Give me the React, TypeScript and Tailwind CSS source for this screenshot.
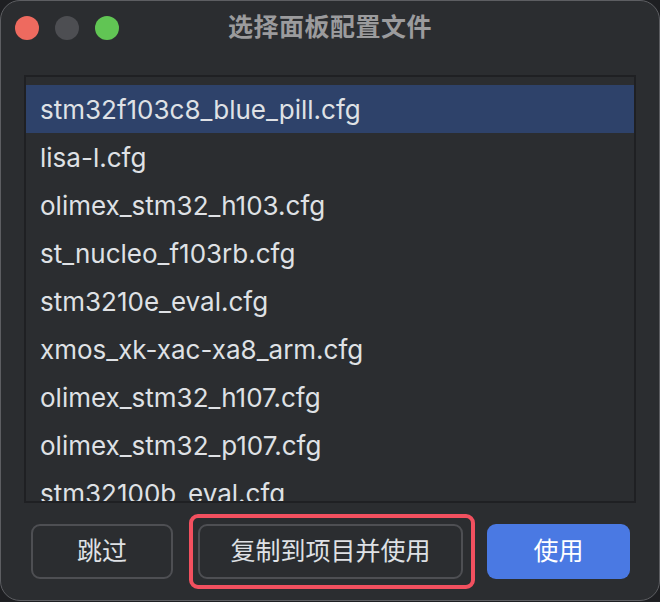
import React from 'react';

const configs = [
  'stm32f103c8_blue_pill.cfg',
  'lisa-l.cfg',
  'olimex_stm32_h103.cfg',
  'st_nucleo_f103rb.cfg',
  'stm3210e_eval.cfg',
  'xmos_xk-xac-xa8_arm.cfg',
  'olimex_stm32_h107.cfg',
  'olimex_stm32_p107.cfg',
  'stm32100b_eval.cfg',
];

const cjk = "font-['Inter','Noto_Sans_CJK_SC',sans-serif]";

export default function App() {
  return (
    <div className="w-[660px] h-[602px] bg-[#1e1f22] overflow-hidden">
      <div className="w-[660px] h-[601px] flex flex-col rounded-[20px] border border-[#5d5e62] bg-[#2b2d30] overflow-hidden">
        {/* Title bar */}
        <div className="grid grid-cols-[1fr_auto_1fr] items-center h-[54px] px-[14px]">
          <div className="flex gap-[16px]">
            <span className="w-[24px] h-[24px] rounded-full bg-[#ee6a5f]" />
            <span className="w-[24px] h-[24px] rounded-full bg-[#4d4e52]" />
            <span className="w-[24px] h-[24px] rounded-full bg-[#61c554]" />
          </div>
          <h1 className={`${cjk} text-[25px] font-bold text-[#9b9b9d] tracking-[0.5px]`}>选择面板配置文件</h1>
          <div />
        </div>

        {/* List */}
        <div className="mt-[20px] mx-[23px] h-[428px] border-2 border-[#1f2023] bg-[#2b2d30] overflow-hidden">
          <ul className="pt-[8px]">
            {configs.map((name, i) => (
              <li
                key={name}
                className={`h-[48px] flex items-center pl-[14px] font-['Inter',sans-serif] text-[26px] text-[#dfe1e5] ${
                  i === 0 ? 'bg-[#2e426a]' : ''
                }`}
              >
                {name}
              </li>
            ))}
          </ul>
        </div>

        {/* Buttons */}
        <div className={`${cjk} flex items-center gap-[24px] pl-[30px] pr-[29px] pt-[21px]`}>
          <button className="w-[143px] h-[55px] rounded-[9px] border-2 border-[#4e4f53] text-[25px] text-[#dfe1e5]">
            跳过
          </button>
          <div className="relative ml-[1px]">
            <button className="w-[265px] h-[55px] rounded-[9px] border-2 border-[#4e4f53] text-[25px] text-[#dfe1e5]">
              复制到项目并使用
            </button>
            <div className="absolute -left-[9px] -top-[10px] -right-[12px] -bottom-[10px] rounded-[9px] border-[4px] border-[#f2505f] pointer-events-none" />
          </div>
          <button className="w-[144px] h-[55px] rounded-[9px] bg-[#4a79e3] text-[25px] text-white">
            使用
          </button>
        </div>
      </div>
    </div>
  );
}
